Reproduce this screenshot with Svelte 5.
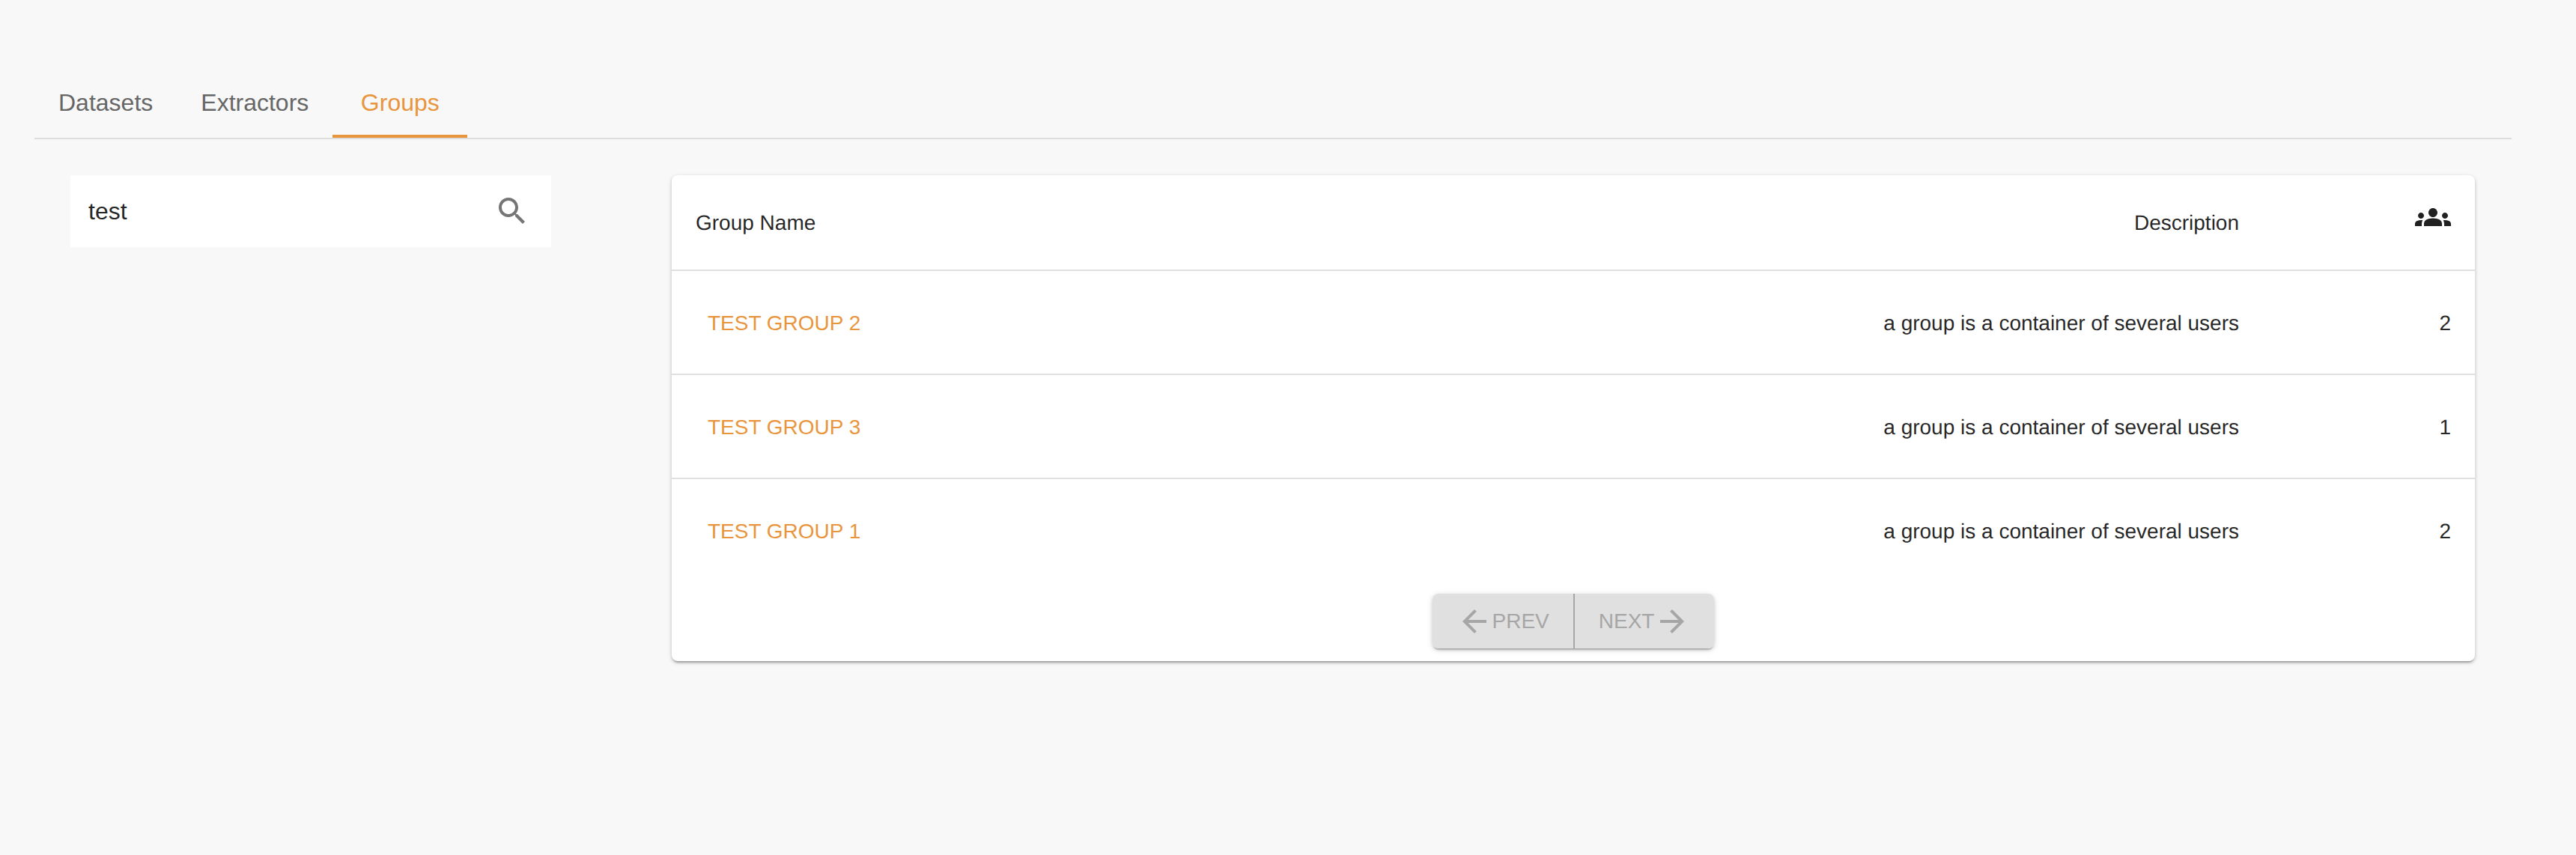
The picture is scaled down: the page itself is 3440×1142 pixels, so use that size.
<script>
  const tabs = ['Datasets', 'Extractors', 'Groups'];
  const groups = [
    { name: 'Test Group 2', description: 'a group is a container of several users', members: 2 },
    { name: 'Test Group 3', description: 'a group is a container of several users', members: 1 },
    { name: 'Test Group 1', description: 'a group is a container of several users', members: 2 },
  ];

  let active = $state('Groups');
  let query = $state('test');
</script>

<div class="page">
  <div class="tabs">
    {#each tabs as tab}
      <button class="tab" class:selected={tab === active} onclick={() => (active = tab)}>{tab}</button>
    {/each}
  </div>

  <div class="content">
    <div class="search">
      <input bind:value={query} aria-label="Search" />
      <svg class="search-icon" viewBox="0 0 24 24" aria-hidden="true">
        <path d="M15.5 14h-.79l-.28-.27C15.41 12.59 16 11.11 16 9.5 16 5.91 13.09 3 9.5 3S3 5.91 3 9.5 5.91 16 9.5 16c1.61 0 3.09-.59 4.23-1.57l.27.28v.79l5 4.99L20.49 19l-4.99-5zm-6 0C7.01 14 5 11.99 5 9.5S7.01 5 9.5 5 14 7.01 14 9.5 11.99 14 9.5 14z" />
      </svg>
    </div>

    <div class="card">
      <table>
        <thead>
          <tr>
            <th class="name-col">Group Name</th>
            <th class="desc-col">Description</th>
            <th class="count-col">
              <svg class="groups-icon" viewBox="0 0 24 24" aria-hidden="true">
                <path d="M12 12.75c1.63 0 3.07.39 4.24.9 1.08.48 1.76 1.56 1.76 2.73V18H6v-1.61c0-1.18.68-2.26 1.76-2.73 1.17-.52 2.61-.91 4.24-.91zM4 13c1.1 0 2-.9 2-2s-.9-2-2-2-2 .9-2 2 .9 2 2 2zm1.13 1.1c-.37-.06-.74-.1-1.13-.1-.99 0-1.93.21-2.78.58C.48 14.9 0 15.62 0 16.43V18h4.5v-1.61c0-.83.23-1.61.63-2.29zM20 13c1.1 0 2-.9 2-2s-.9-2-2-2-2 .9-2 2 .9 2 2 2zm4 3.43c0-.81-.48-1.53-1.22-1.85-.85-.37-1.79-.58-2.78-.58-.39 0-.76.04-1.13.1.4.68.63 1.46.63 2.29V18H24v-1.57zM12 6c1.66 0 3 1.34 3 3s-1.34 3-3 3-3-1.34-3-3 1.34-3 3-3z" />
              </svg>
            </th>
          </tr>
        </thead>
        <tbody>
          {#each groups as group}
            <tr>
              <td class="name-col"><button class="link">{group.name}</button></td>
              <td class="desc-col">{group.description}</td>
              <td class="count-col">{group.members}</td>
            </tr>
          {/each}
        </tbody>
      </table>

      <div class="pager">
        <div class="pager-group">
          <button class="page-btn" disabled>
            <svg viewBox="0 0 24 24" aria-hidden="true"><path d="M20 11H7.83l5.59-5.59L12 4l-8 8 8 8 1.41-1.41L7.83 13H20v-2z" /></svg>
            Prev
          </button>
          <button class="page-btn" disabled>
            Next
            <svg viewBox="0 0 24 24" aria-hidden="true"><path d="M12 4l-1.41 1.41L16.17 11H4v2h12.17l-5.58 5.59L12 20l8-8z" /></svg>
          </button>
        </div>
      </div>
    </div>
  </div>
</div>

<style>
  :global(body) {
    margin: 0;
    background: #f8f8f8;
  }

  .page {
    min-height: 100vh;
    box-sizing: border-box;
    padding: 88px 86px 0 46px;
    font-family: 'Liberation Sans', Arial, sans-serif;
    text-rendering: geometricPrecision;
    color: rgba(0, 0, 0, 0.87);
  }

  .tabs {
    display: flex;
    border-bottom: 2px solid #dcdcdc;
  }

  .tab {
    min-width: 180px;
    height: 96px;
    padding: 6px 32px 0;
    border: 0;
    border-bottom: 4px solid transparent;
    background: none;
    font: inherit;
    font-size: 32px;
    color: #666;
  }

  .tab.selected {
    color: #e8953d;
    border-bottom-color: #e8953d;
  }

  .content {
    display: grid;
    grid-template-columns: 642px 1fr;
    gap: 161px;
    align-items: start;
    padding: 48px 49px 0 48px;
  }

  .search {
    display: flex;
    align-items: center;
    justify-content: space-between;
    height: 96px;
    padding: 0 28px 0 24px;
    background: #fff;
  }

  .search input {
    flex: 1;
    min-width: 0;
    border: 0;
    padding: 0;
    outline: 0;
    background: none;
    font: inherit;
    font-size: 32px;
    color: rgba(0, 0, 0, 0.87);
  }

  .search-icon {
    width: 48px;
    height: 48px;
    fill: #757575;
  }

  .card {
    padding-bottom: 17px;
    background: #fff;
    border-radius: 8px;
    box-shadow: 0 4px 2px -2px rgba(0, 0, 0, 0.2), 0 2px 4px 0 rgba(0, 0, 0, 0.14), 0 2px 6px 0 rgba(0, 0, 0, 0.12);
  }

  table {
    width: 100%;
    border-collapse: separate;
    border-spacing: 0;
    table-layout: fixed;
    font-size: 28px;
  }

  th,
  td {
    padding: 2px 32px 0;
    font-weight: 400;
    border-bottom: 2px solid #e0e0e0;
  }

  tbody tr:last-child td {
    border-bottom: 0;
  }

  th {
    height: 124px;
  }

  td {
    height: 135px;
  }

  .name-col {
    text-align: left;
  }

  .desc-col {
    width: 1000px;
    text-align: right;
  }

  .count-col {
    width: 219px;
    text-align: right;
  }

  .groups-icon {
    display: block;
    width: 48px;
    height: 48px;
    margin: -16px 0 0 auto;
    fill: rgba(0, 0, 0, 0.87);
  }

  .link {
    padding: 0 16px;
    border: 0;
    background: none;
    font: inherit;
    text-transform: uppercase;
    color: #e8953d;
  }

  .pager {
    display: flex;
    justify-content: center;
    margin-top: 16px;
  }

  .pager-group {
    display: flex;
    border-radius: 8px;
    box-shadow: 0 4px 2px -2px rgba(0, 0, 0, 0.2), 0 2px 4px 0 rgba(0, 0, 0, 0.14), 0 2px 10px 0 rgba(0, 0, 0, 0.12);
  }

  .page-btn {
    display: flex;
    align-items: center;
    height: 73px;
    padding: 0 32px;
    border: 0;
    background: #e0e0e0;
    font: inherit;
    font-size: 28px;
    text-transform: uppercase;
    color: #a6a6a6;
  }

  .page-btn:first-child {
    border-right: 2px solid #a6a6a6;
    border-radius: 8px 0 0 8px;
  }

  .page-btn:last-child {
    border-radius: 0 8px 8px 0;
  }

  .page-btn svg {
    width: 48px;
    height: 48px;
    fill: currentColor;
  }
</style>
